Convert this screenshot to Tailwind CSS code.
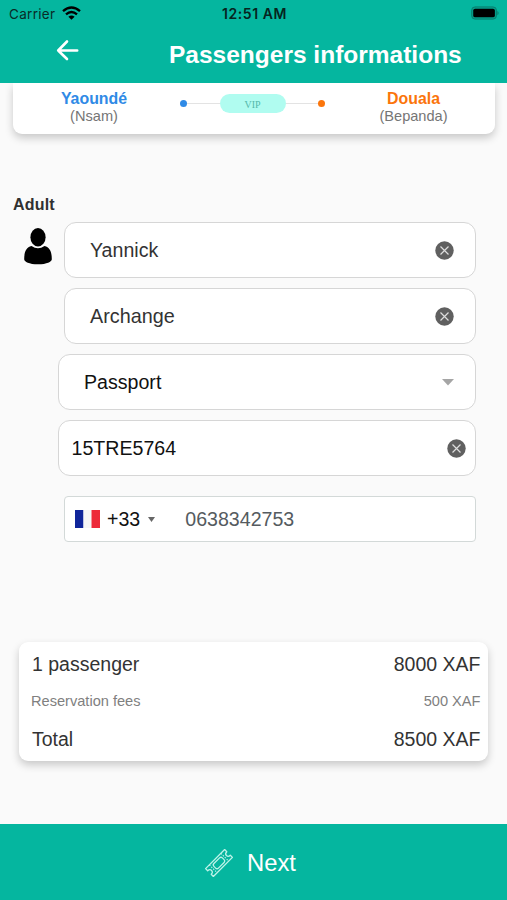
<!DOCTYPE html>
<html lang="en">
<head>
<meta charset="utf-8">
<title>Passengers informations</title>
<script src="https://cdn.jsdelivr.net/npm/@tailwindcss/browser@4"></script>
</head>
<body class="w-[507px] h-[900px] overflow-hidden bg-[#fafafa] font-['Liberation_Sans',Arial,sans-serif] flex flex-col text-[#333]">
<header class="h-[83px] shrink-0 bg-[#05b69f] relative z-10">
  <div class="h-7 grid grid-cols-3 items-center pl-[9px] pr-[7px] font-['Inter',sans-serif] text-[13.5px] leading-7 text-[#092b27]">
    <div class="flex items-center gap-[7px]"><span class="tracking-[.3px]">Carrier</span>
      <svg class="w-[19px] h-[14px] -mt-0.5" viewBox="0 0 19 14" fill="none" stroke="#000" stroke-width="2.4"><path d="M1 5.2Q9.500-2 18 5.200M4 8.400q5.500-4.600 11 0"/><path d="M6.400 10.700q3.100-2.400 6.200 0L9.500 13.700z" fill="#000" stroke="none"/></svg>
    </div>
    <div class="text-center font-semibold text-[#062420] text-[14px] tracking-[.55px] whitespace-nowrap">12:51 AM</div>
    <svg class="w-[29px] h-[14px] justify-self-end -mt-0.5" viewBox="0 0 30 14"><rect x=".7" y=".7" width="25.6" height="12.6" rx="3.5" fill="#05a08c" stroke="#087c6d"/><rect x="2.300" y="2.500" width="22.400" height="9" rx="2" fill="#000"/><path d="M27.300 4.600q2.600 2.400 0 4.800z" fill="#087c6d"/></svg>
  </div>
  <div class="flex items-center pl-[56px] pt-[8px]">
    <svg class="w-[24px] h-[24px] -mt-[11px]" viewBox="0 0 24 24" fill="none" stroke="#fff" stroke-width="2.600" stroke-linecap="round" stroke-linejoin="round"><path d="M11 3.500 2.200 12.500l8.800 8.500M2.200 12.500h19"/></svg>
    <h1 class="ml-[89px] text-[24.5px] leading-[38px] font-bold text-white whitespace-nowrap">Passengers informations</h1>
  </div>
</header>

<section class="h-[51px] shrink-0 ml-[13px] mr-3 bg-white rounded-b-[9px] shadow-[0_4px_8px_rgba(0,0,0,.2)] grid grid-cols-[162px_158px_162px] text-center pt-[6px]">
  <div class="pt-px"><div class="font-bold text-[15.900px] leading-[18px] text-[#2f8ae6]">Yaoundé</div><div class="text-[14.600px] leading-[17px] text-[#757575]">(Nsam)</div></div>
  <div class="h-7 flex items-center pl-[5px] pr-[8px]">
    <i class="size-[7px] rounded-full bg-[#2f8ae6]"></i><i class="h-px flex-1 bg-[#e3e3e3]"></i>
    <span class="w-[66px] h-[19px] rounded-full bg-[#b0fcf0] text-[#55b8ab] font-['Liberation_Serif',serif] text-[10px] leading-[21px]">VIP</span>
    <i class="h-px flex-1 bg-[#e3e3e3]"></i><i class="size-[7px] rounded-full bg-[#fb750b]"></i>
  </div>
  <div class="pr-[1px] pt-px"><div class="font-bold text-[15.900px] leading-[18px] text-[#fb750b]">Douala</div><div class="text-[14.600px] leading-[17px] text-[#757575]">(Bepanda)</div></div>
</section>

<main class="pt-[61px] pl-[13px] h-[508px] shrink-0">
  <h2 class="font-bold text-[16px] leading-5 text-[#303030] tracking-[.2px]">Adult</h2>
  <div class="flex pt-[7px]">
    <svg class="w-[28px] h-[37px] mt-[6px] ml-[10.500px] shrink-0" viewBox="0 0 28 37"><ellipse cx="14" cy="9.300" rx="7.600" ry="9.200"/><path d="M7.500 18q6.500 4.600 13 0c5.500 1.500 7.300 6 7.300 13.200 0 2.400-5 5.100-13.800 5.100S.2 33.600.2 31.200C.2 24 2 19.500 7.500 18z"/></svg>
    <div class="flex flex-col items-end gap-[10px] w-[424.500px]">
      <div class="w-[412px] h-14 bg-white border border-[#d6d6d6] rounded-[12px] flex items-center justify-between pl-[25px] pr-[21px] text-[19.600px] text-[#333]"><span class="pt-[2px]">Yannick</span><svg class="size-[19px]" viewBox="0 0 19 19"><circle cx="9.500" cy="9.500" r="9.200" fill="#606060"/><path d="m5.500 5.500 8 8m0-8-8 8" stroke="#ddd" stroke-width="1.200"/></svg></div>
      <div class="w-[412px] h-14 bg-white border border-[#d6d6d6] rounded-[12px] flex items-center justify-between pl-[25px] pr-[21px] text-[19.800px] text-[#333]"><span class="pt-[2px]">Archange</span><svg class="size-[19px]" viewBox="0 0 19 19"><circle cx="9.500" cy="9.500" r="9.200" fill="#606060"/><path d="m5.500 5.500 8 8m0-8-8 8" stroke="#ddd" stroke-width="1.200"/></svg></div>
      <div class="w-[418px] h-14 bg-white border border-[#d6d6d6] rounded-[12px] flex items-center justify-between pl-[25px] pr-[21px] text-[19.600px] text-[#111]"><span class="pt-[2px]">Passport</span><svg class="w-3 h-[7px]" viewBox="0 0 12 7"><path d="M0 0h12L6 6.500z" fill="#a5a5a5"/></svg></div>
      <div class="w-[418px] h-14 bg-white border border-[#d6d6d6] rounded-[12px] flex items-center justify-between pl-[12.500px] pr-[9px] text-[19.600px] text-[#111]"><span class="pt-[2px]">15TRE5764</span><svg class="size-[19px]" viewBox="0 0 19 19"><circle cx="9.500" cy="9.500" r="9.200" fill="#606060"/><path d="m5.500 5.500 8 8m0-8-8 8" stroke="#ddd" stroke-width="1.200"/></svg></div>
      <div class="w-[412px] h-[46px] mt-[10px] bg-white border border-[#d3d9d8] rounded-[4px] flex items-center pl-[10px] text-[19.600px]">
        <svg class="w-[25px] h-[18px]" viewBox="0 0 25 18"><path fill="#10259a" d="M0 0h8.500v18H0z"/><path fill="#f6f6f6" d="M8.500 0h8v18h-8z"/><path fill="#ed2939" d="M16.500 0H25v18h-8.500z"/></svg>
        <span class="text-[#111] ml-[7px] pt-[2px]">+33</span>
        <svg class="w-[7px] h-[5px] ml-[8px]" viewBox="0 0 7 5"><path d="M0 0h7L3.500 5z" fill="#666"/></svg>
        <span class="ml-[30px] text-[#555b60] pt-[2px]">0638342753</span>
      </div>
    </div>
  </div>
</main>

<section class="mx-[19px] h-[119px] shrink-0 bg-white rounded-[9px] shadow-[0_4px_8px_rgba(0,0,0,.2)] pl-3 pr-[7.500px] text-[19.500px]">
  <div class="flex justify-between h-[45px] pt-px items-center"><span class="pl-px">1 passenger</span><span>8000 XAF</span></div>
  <div class="flex justify-between h-[29px] items-center text-[14.600px] text-[#808080]"><span>Reservation fees</span><span>500 XAF</span></div>
  <div class="flex justify-between h-[45px] pt-[2px] items-center"><span class="pl-px">Total</span><span>8500 XAF</span></div>
</section>

<footer class="mt-auto h-[76px] shrink-0 bg-[#05b69f] flex items-center pl-[204px] text-white">
  <svg class="w-[30px] h-[30px] mt-px" viewBox="0 0 30 30" fill="none" stroke="#bff3e9" stroke-width="1.300" stroke-linejoin="round"><g transform="rotate(-45 15 15)"><path d="M1.500 9.500h27v3q-3 0-3 2.500t3 2.500v3h-27v-3q3 0 3-2.500t-3-2.500z"/><rect x="9" y="11.800" width="12" height="6.400" rx="2"/><path d="M6.800 9.500v11m16.400-11v11" stroke-dasharray="1.500 1.200" stroke-width="1"/></g></svg>
  <span class="ml-[13px] pt-[2px] text-[23.800px] leading-7">Next</span>
</footer>
</body>
</html>
